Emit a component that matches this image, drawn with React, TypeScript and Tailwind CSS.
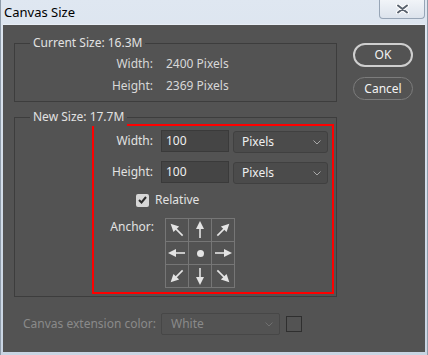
import React from 'react';

const ui = "font-['Noto_Sans','DejaVu_Sans',sans-serif]";

// ── Anchor arrow ─────────────────────────────────────────────────────────────
function Arrow({ rot }: { rot: number }) {
  return (
    <svg width="22" height="22" viewBox="0 0 22 22">
      <g transform={`rotate(${rot} 11 11)`} fill="#e4e4e4" stroke="#e4e4e4">
        <line x1="11" y1="19" x2="11" y2="8" strokeWidth="1.6" />
        <polygon points="11,2 7,10 15,10" stroke="none" />
      </g>
    </svg>
  );
}

function Chevron({ color = '#a8a8a8' }: { color?: string }) {
  return (
    <svg width="8" height="5" viewBox="0 0 8 5" fill="none" stroke={color} strokeWidth="1">
      <polyline points="0.5,0.5 4,4 7.5,0.5" />
    </svg>
  );
}

function Group({ title, className, children }: { title: string; className: string; children: React.ReactNode }) {
  return (
    <div className={`relative border border-[#3d3d3d] ${className}`}>
      <span className="absolute -top-[10px] left-[15px] px-[3px] bg-[#535353] text-[#e2e2e2] leading-[18px]">{title}</span>
      {children}
    </div>
  );
}

export default function App() {
  const anchors: (number | null)[] = [-45, 0, 45, -90, null, 90, -135, 180, 135];

  return (
    <div className={`w-[428px] h-[355px] flex flex-col bg-gradient-to-b from-[#dfe7f1] to-[#c9d5e3] border-l border-r border-[#8f9caa] ${ui} text-[12px]`}>
      {/* ── Title bar ───────────────────────────────────────────────────────── */}
      <div className="h-[24px] flex items-start justify-between shrink-0">
        <span className="pl-[3px] pt-[4px] text-[13px] leading-[16px] text-black">Canvas Size</span>
        <div className="w-[46px] h-[19px] mr-[2px] rounded-b-[4px] border border-t-0 border-[#97a5b6] bg-gradient-to-b from-[#f1f4f8] to-[#dce3ec] flex items-center justify-center">
          <svg width="15" height="10" viewBox="0 0 15 10">
            <path d="M3 1.5 L12 8.5 M12 1.5 L3 8.5" stroke="#ffffff" strokeWidth="4" strokeLinecap="round" />
            <path d="M3 1.5 L12 8.5 M12 1.5 L3 8.5" stroke="#59626e" strokeWidth="2" strokeLinecap="round" />
          </svg>
        </div>
      </div>

      {/* ── Dialog body ─────────────────────────────────────────────────────── */}
      <div className="flex-1 mx-[2px] mb-[3px] bg-[#535353] border-t border-[#e8eef5] flex flex-col pl-[11px]">
        <div className="flex">
          <div className="w-[323px]">
            {/* Current size */}
            <Group title="Current Size: 16.3M" className="mt-[18px] h-[59px] pt-[9px]">
              <div className="grid grid-cols-[138px_1fr] gap-x-[13px] text-[#d8d8d8] leading-[22px]">
                <span className="text-right">Width:</span>
                <span>2400 Pixels</span>
                <span className="text-right">Height:</span>
                <span>2369 Pixels</span>
              </div>
            </Group>

            {/* New size */}
            <Group title="New Size: 17.7M" className="mt-[15px] h-[180px] pt-[6px] pl-[77px] pr-[2px]">
              <div className="h-[170px] border-2 border-[#ff0000] pt-[4px] text-[#e2e2e2]">
                {[['Width:', '100'], ['Height:', '100']].map(([l, v], i) => (
                  <div key={l} className={`flex items-center h-[22px] ${i ? 'mt-[9px]' : ''}`}>
                    <span className="w-[59px] text-right">{l}</span>
                    <div className="ml-[8px] w-[68px] h-[22px] bg-[#454545] border border-[#3a3a3a] flex items-center pl-[4px] text-[#f0f0f0]">{v}</div>
                    <div className="ml-[4px] translate-y-[1px] w-[95px] h-[22px] bg-[#4b4b4b] border border-[#404040] rounded-[3px] flex items-center justify-between pl-[8px] pr-[6px] text-[#f0f0f0]">
                      <span>Pixels</span>
                      <Chevron />
                    </div>
                  </div>
                ))}

                <div className="mt-[9px] ml-[42px] flex items-center h-[16px]">
                  <div className="w-[13px] h-[13px] rounded-[2px] bg-[#d6d6d6] flex items-center justify-center">
                    <svg width="9" height="8" viewBox="0 0 9 8" fill="none" stroke="#2c2c2c" strokeWidth="2">
                      <polyline points="1,4 3.5,6.5 8,1" />
                    </svg>
                  </div>
                  <span className="ml-[6px]">Relative</span>
                </div>

                <div className="mt-[10px] flex items-start">
                  <span className="w-[60px] text-right leading-[18px]">Anchor:</span>
                  <div className="ml-[11px] grid grid-cols-[22px_22px_22px] grid-rows-[22px_22px_22px] gap-px p-px bg-[#767676]">
                    {anchors.map((r, i) => (
                      <div key={i} className="bg-[#535353] flex items-center justify-center">
                        {r === null ? <div className="w-[7px] h-[7px] rounded-full bg-[#e4e4e4]" /> : <Arrow rot={r} />}
                      </div>
                    ))}
                  </div>
                </div>
              </div>
            </Group>
          </div>

          {/* Buttons */}
          <div className="ml-[16px] mt-[18px] flex flex-col">
            <button className="w-[60px] h-[24px] rounded-full border-2 border-[#cfcfcf] text-[#f2f2f2] text-[12px] leading-none">OK</button>
            <button className="mt-[10px] w-[60px] h-[23px] rounded-full border border-[#7c7c7c] text-[#f2f2f2] text-[12px] leading-none">Cancel</button>
          </div>
        </div>

        {/* Canvas extension colour */}
        <div className="mt-[16px] flex items-center text-[#8a8a8a]">
          <span className="ml-[9px]">Canvas extension color:</span>
          <div className="ml-[5px] w-[119px] h-[22px] border border-[#474747] rounded-[2px] flex items-center justify-between pl-[9px] pr-[6px]">
            <span>White</span>
            <Chevron color="#6f6f6f" />
          </div>
          <div className="ml-[6px] w-[16px] h-[16px] border border-[#2f2f2f]" />
        </div>
      </div>
    </div>
  );
}
